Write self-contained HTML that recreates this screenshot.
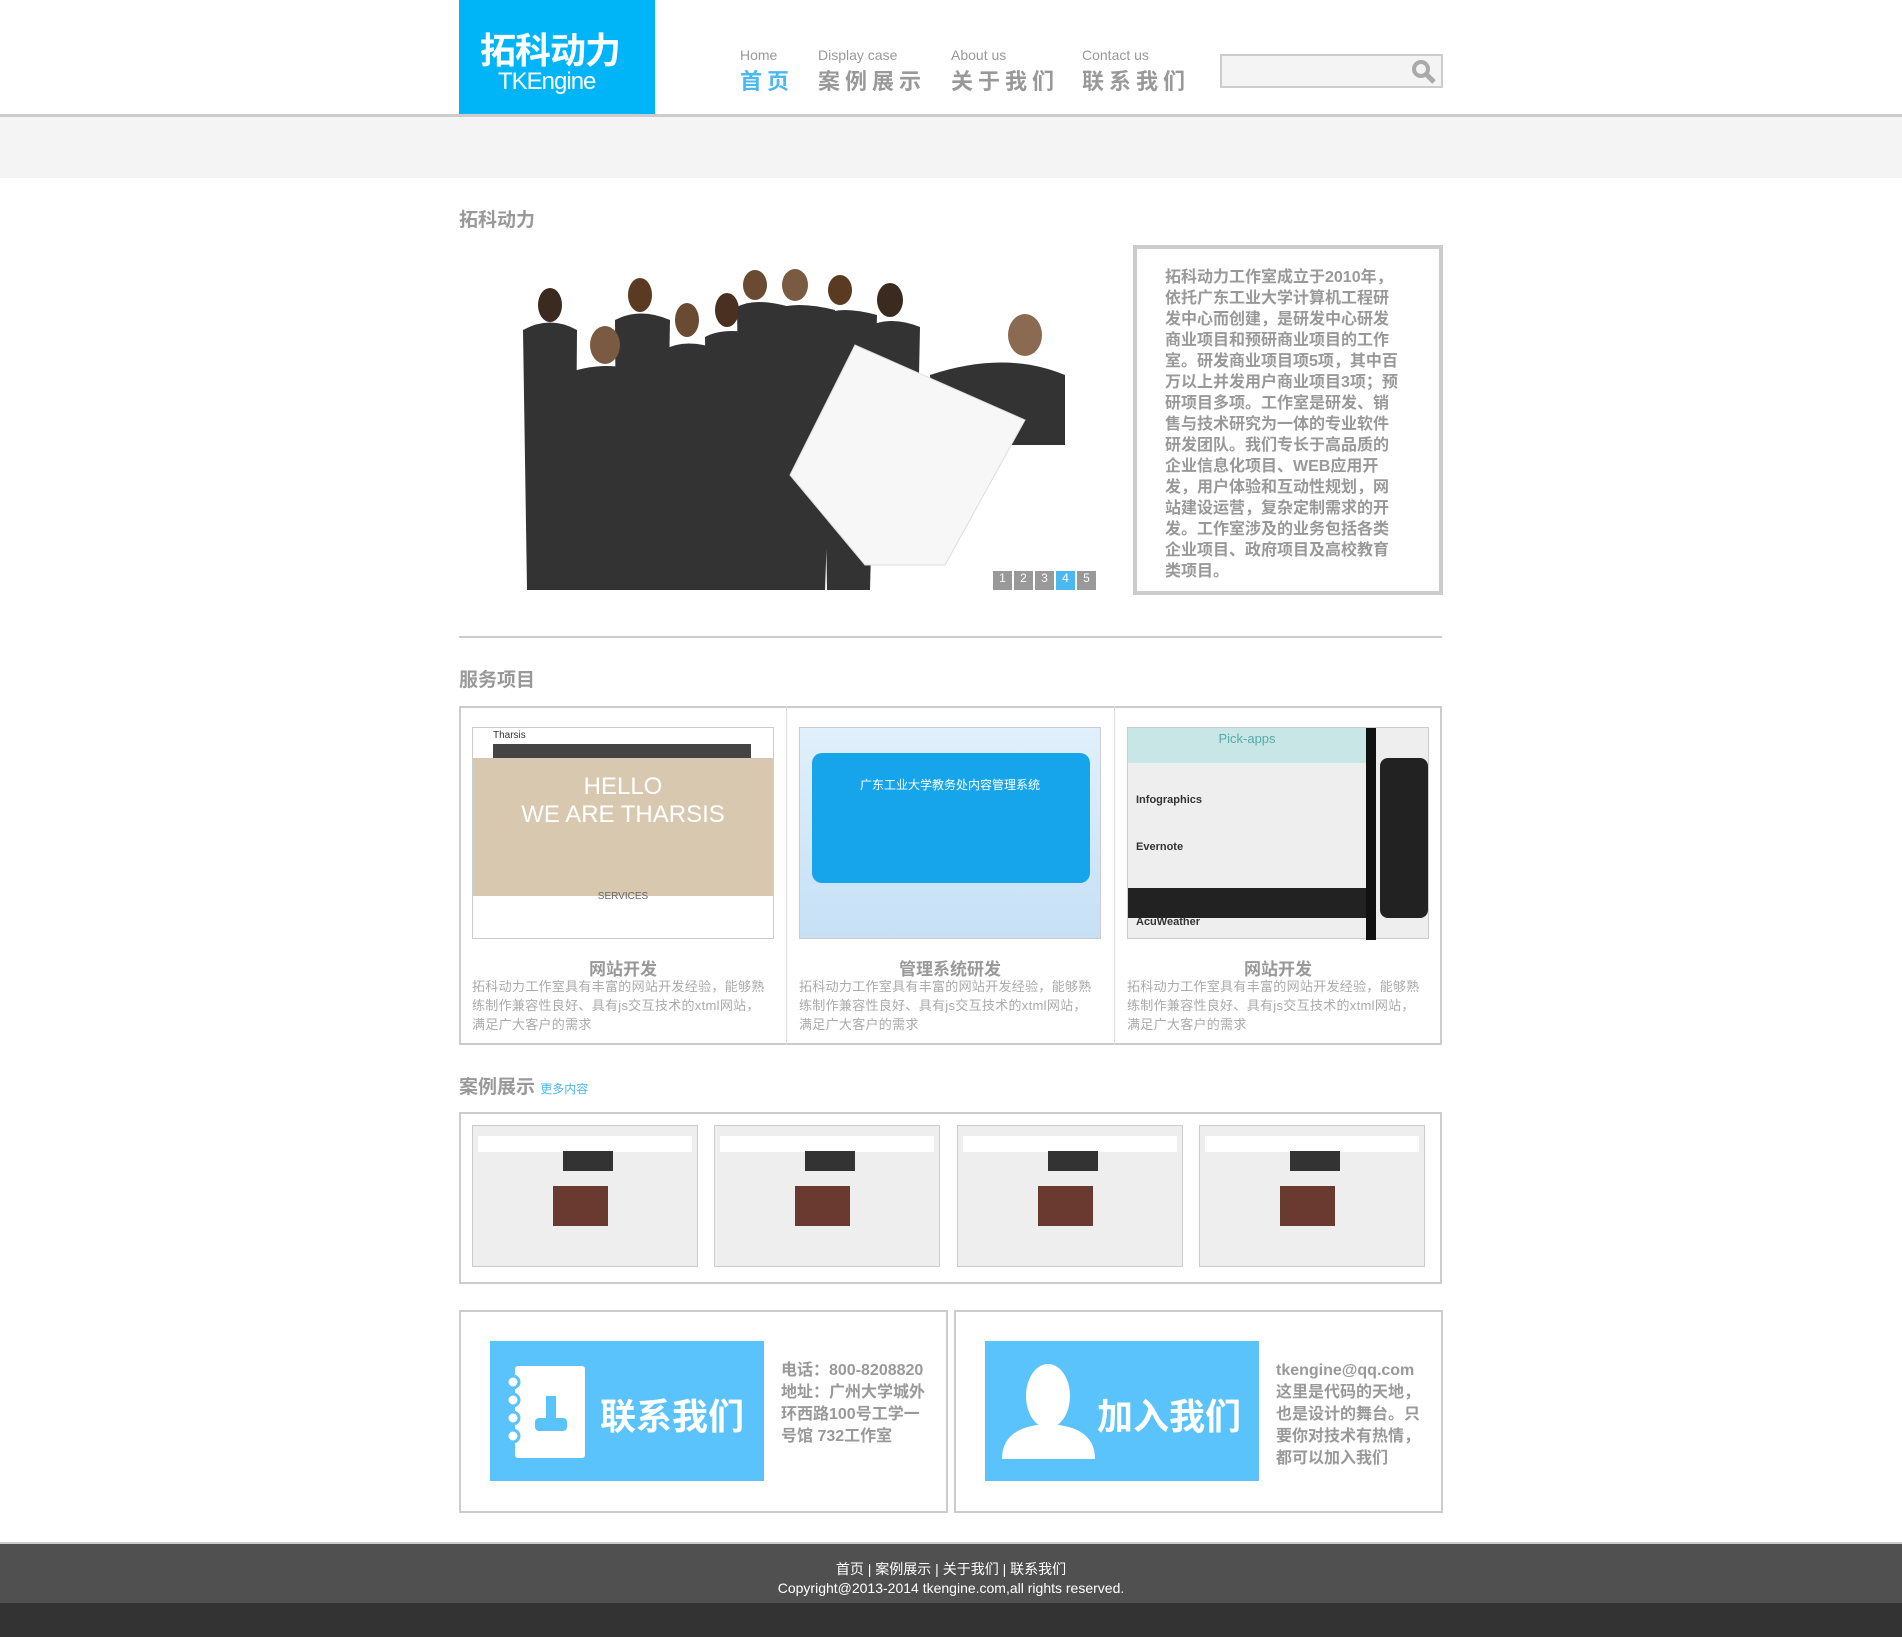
<!DOCTYPE html>
<html><head><meta charset="utf-8">
<style>
*{margin:0;padding:0;box-sizing:border-box}
body{width:1902px;height:1637px;background:#fff;font-family:"Liberation Sans","Noto Sans CJK SC",sans-serif;position:relative;overflow:hidden;color:#999}
.a{position:absolute}
.nav .en{font-size:14px;color:#999;position:absolute;top:47px}
.nav .cn{font-size:22px;color:#999;position:absolute;top:64px;letter-spacing:5px;font-weight:bold}
.h{font-size:19px;color:#999;font-weight:bold}
.desc{font-size:13px;line-height:19px;color:#aaa;letter-spacing:0.3px}
.case{position:absolute;top:1125px;width:226px;height:142px;border:1px solid #ccc;background:#eee;overflow:hidden}
</style></head><body>
<div class="a" style="left:459px;top:0;width:196px;height:115px;background:#00b4f8"></div>
<div class="a" style="left:480px;top:22px;font-size:36px;font-weight:bold;color:#fff;letter-spacing:-1px">拓科动力</div>
<div class="a" style="left:498px;top:68px;font-size:24px;color:#fff;letter-spacing:-1px">TKEngine</div>
<div class="nav">
<span class="en" style="left:740px">Home</span><span class="cn" style="left:740px;color:#4cb8f0">首页</span>
<span class="en" style="left:818px">Display case</span><span class="cn" style="left:818px">案例展示</span>
<span class="en" style="left:951px">About us</span><span class="cn" style="left:951px">关于我们</span>
<span class="en" style="left:1082px">Contact us</span><span class="cn" style="left:1082px">联系我们</span>
</div>
<div class="a" style="left:1220px;top:54px;width:223px;height:34px;border:2px solid #ccc;background:#f4f4f4"></div>
<svg class="a" style="left:1410px;top:58px" width="28" height="28"><circle cx="11" cy="11" r="7" fill="none" stroke="#aaa" stroke-width="4"/><line x1="16" y1="16" x2="24" y2="24" stroke="#aaa" stroke-width="5"/></svg>
<div class="a" style="left:0;top:114px;width:1902px;height:3px;background:#ccc"></div>
<div class="a" style="left:0;top:117px;width:1902px;height:61px;background:#f4f4f4"></div>

<div class="a h" style="left:459px;top:205px">拓科动力</div>
<svg class="a" style="left:505px;top:265px" width="600" height="330">
<g fill="#333">
<ellipse cx="45" cy="40" rx="12" ry="17" fill="#3a2a20"/><path d="M18 65 Q45 50 72 65 L70 325 L22 325Z"/>
<ellipse cx="135" cy="30" rx="12" ry="17" fill="#5a3a20"/><path d="M110 55 Q135 42 165 55 L160 325 L112 325Z"/>
<ellipse cx="100" cy="80" rx="15" ry="19" fill="#7a5a40"/><path d="M58 110 Q100 92 150 110 L145 325 L65 325Z"/>
<ellipse cx="182" cy="55" rx="12" ry="17" fill="#6a4a30"/><path d="M158 85 Q182 72 215 85 L210 325 L160 325Z"/>
<ellipse cx="222" cy="45" rx="12" ry="17" fill="#4a3020"/><path d="M200 72 Q222 60 265 72 L255 325 L205 325Z"/>
<ellipse cx="250" cy="20" rx="12" ry="15" fill="#6a4a30"/><path d="M232 42 Q250 32 285 42 L280 325 L236 325Z"/>
<ellipse cx="290" cy="20" rx="13" ry="16" fill="#7a5a40"/><path d="M268 45 Q290 35 330 45 L320 325 L272 325Z"/>
<ellipse cx="335" cy="25" rx="12" ry="15" fill="#5a3a20"/><path d="M318 50 Q335 40 372 50 L365 325 L322 325Z"/>
<ellipse cx="385" cy="35" rx="13" ry="17" fill="#3a2a20"/><path d="M362 62 Q385 50 415 62 L410 300 L365 300Z"/>
<ellipse cx="520" cy="70" rx="17" ry="21" fill="#8a6a50"/><path d="M425 110 Q500 85 560 110 L560 180 L430 180Z"/>
</g>
<polygon points="285,210 350,80 520,155 440,300 360,300" fill="#f7f7f7" stroke="#ddd"/>
</svg>
<div class="a" style="left:993px;top:571px;display:flex;gap:2px;font-size:12px">
<span style="background:#999;color:#fff;width:19px;height:19px;text-align:center">1</span><span style="background:#999;color:#fff;width:19px;height:19px;text-align:center">2</span><span style="background:#999;color:#fff;width:19px;height:19px;text-align:center">3</span><span style="background:#4cb8f0;color:#fff;width:19px;height:19px;text-align:center">4</span><span style="background:#999;color:#fff;width:19px;height:19px;text-align:center">5</span></div>
<div class="a" style="left:1133px;top:245px;width:310px;height:350px;border:4px solid #ccc;padding:18px 36px 0 28px;font-size:16px;line-height:21px;color:#999;font-weight:bold">拓科动力工作室成立于2010年，依托广东工业大学计算机工程研发中心而创建，是研发中心研发商业项目和预研商业项目的工作室。研发商业项目项5项，其中百万以上并发用户商业项目3项；预研项目多项。工作室是研发、销售与技术研究为一体的专业软件研发团队。我们专长于高品质的企业信息化项目、WEB应用开发，用户体验和互动性规划，网站建设运营，复杂定制需求的开发。工作室涉及的业务包括各类企业项目、政府项目及高校教育类项目。</div>
<div class="a" style="left:459px;top:636px;width:983px;height:2px;background:#ccc"></div>

<div class="a h" style="left:459px;top:665px">服务项目</div>
<div class="a" style="left:459px;top:706px;width:983px;height:339px;border:2px solid #ccc"></div>
<div class="a" style="left:786px;top:706px;width:1px;height:339px;background:#ddd"></div>
<div class="a" style="left:1114px;top:706px;width:1px;height:339px;background:#ddd"></div>
<div class="a" style="left:472px;top:727px;width:302px;height:212px;border:1px solid #ccc;background:linear-gradient(#fff 0 30px,#d8c8b0 30px 168px,#fff 168px)"><div style="position:absolute;left:20px;top:16px;width:258px;height:14px;background:#444"></div><div style="color:#fff;font-size:24px;text-align:center;margin-top:45px;line-height:28px">HELLO<br>WE ARE THARSIS</div><div style="color:#666;font-size:10px;text-align:center;margin-top:62px">SERVICES</div><div style="position:absolute;left:20px;top:2px;font-size:10px;color:#333">Tharsis</div></div>
<div class="a" style="left:799px;top:727px;width:302px;height:212px;border:1px solid #ccc;background:linear-gradient(#e0f0fc,#c6e0f6)"><div style="position:absolute;left:12px;top:25px;width:278px;height:130px;border-radius:10px;background:#16a5ea"></div><div style="position:absolute;left:0;width:300px;top:48px;text-align:center;color:#fff;font-size:12px">广东工业大学教务处内容管理系统</div></div>
<div class="a" style="left:1127px;top:727px;width:302px;height:212px;border:1px solid #ccc;background:#eee"><div style="position:absolute;left:0;top:0;width:238px;height:35px;background:#c8e6e6;color:#5aa;font-size:13px;text-align:center;line-height:22px">Pick-apps</div><div style="position:absolute;left:0;top:160px;width:238px;height:30px;background:#222"></div><div style="position:absolute;left:238px;top:0;width:10px;height:212px;background:#111"></div><div style="position:absolute;left:252px;top:30px;width:48px;height:160px;border-radius:8px;background:#222"></div><div style="position:absolute;left:8px;top:66px;font-size:11px;color:#333;font-weight:bold">Infographics</div><div style="position:absolute;left:8px;top:113px;font-size:11px;color:#333;font-weight:bold">Evernote</div><div style="position:absolute;left:8px;top:188px;font-size:11px;color:#333;font-weight:bold">AcuWeather</div></div>
<div class="a h" style="left:472px;top:955px;width:302px;text-align:center;font-size:17px">网站开发</div>
<div class="a h" style="left:799px;top:955px;width:302px;text-align:center;font-size:17px">管理系统研发</div>
<div class="a h" style="left:1127px;top:955px;width:302px;text-align:center;font-size:17px">网站开发</div>
<div class="a desc" style="left:472px;top:977px;width:300px">拓科动力工作室具有丰富的网站开发经验，能够熟练制作兼容性良好、具有js交互技术的xtml网站，满足广大客户的需求</div>
<div class="a desc" style="left:799px;top:977px;width:300px">拓科动力工作室具有丰富的网站开发经验，能够熟练制作兼容性良好、具有js交互技术的xtml网站，满足广大客户的需求</div>
<div class="a desc" style="left:1127px;top:977px;width:300px">拓科动力工作室具有丰富的网站开发经验，能够熟练制作兼容性良好、具有js交互技术的xtml网站，满足广大客户的需求</div>

<div class="a h" style="left:459px;top:1072px">案例展示 <span style="font-size:12px;color:#4cb8f0;font-weight:normal">更多内容</span></div>
<div class="a" style="left:459px;top:1112px;width:983px;height:172px;border:2px solid #ccc"></div>
<div class="case" style="left:472px"><div style="margin:10px 5px;height:16px;background:#fff"></div><div style="position:absolute;left:90px;top:25px;width:50px;height:20px;background:#333"></div><div style="position:absolute;left:80px;top:60px;width:55px;height:40px;background:#6a3a30"></div></div>
<div class="case" style="left:714px"><div style="margin:10px 5px;height:16px;background:#fff"></div><div style="position:absolute;left:90px;top:25px;width:50px;height:20px;background:#333"></div><div style="position:absolute;left:80px;top:60px;width:55px;height:40px;background:#6a3a30"></div></div>
<div class="case" style="left:957px"><div style="margin:10px 5px;height:16px;background:#fff"></div><div style="position:absolute;left:90px;top:25px;width:50px;height:20px;background:#333"></div><div style="position:absolute;left:80px;top:60px;width:55px;height:40px;background:#6a3a30"></div></div>
<div class="case" style="left:1199px"><div style="margin:10px 5px;height:16px;background:#fff"></div><div style="position:absolute;left:90px;top:25px;width:50px;height:20px;background:#333"></div><div style="position:absolute;left:80px;top:60px;width:55px;height:40px;background:#6a3a30"></div></div>

<div class="a" style="left:459px;top:1310px;width:489px;height:203px;border:2px solid #ccc"></div>
<div class="a" style="left:954px;top:1310px;width:489px;height:203px;border:2px solid #ccc"></div>
<div class="a" style="left:490px;top:1341px;width:274px;height:140px;background:#5bc3fc"></div>
<svg class="a" style="left:503px;top:1362px" width="90" height="100"><rect x="12" y="4" width="70" height="92" rx="3" fill="#fff"/><g fill="#fff" stroke="#5bc3fc" stroke-width="3"><circle cx="10" cy="20" r="6"/><circle cx="10" cy="38" r="6"/><circle cx="10" cy="56" r="6"/><circle cx="10" cy="74" r="6"/></g><rect x="43" y="34" width="10" height="26" fill="#5bc3fc"/><rect x="32" y="56" width="32" height="13" rx="4" fill="#5bc3fc"/></svg>
<div class="a" style="left:600px;top:1388px;font-size:36px;color:#fff;font-weight:bold">联系我们</div>
<div class="a" style="left:781px;top:1360px;font-size:16px;line-height:22px;color:#999;font-weight:bold;width:152px">电话：800-8208820<br>地址：广州大学城外环西路100号工学一号馆 732工作室</div>
<div class="a" style="left:985px;top:1341px;width:274px;height:140px;background:#5bc3fc"></div>
<svg class="a" style="left:1000px;top:1362px" width="100" height="100"><ellipse cx="48" cy="34" rx="22" ry="32" fill="#fff"/><path d="M2 97 Q2 64 48 62 Q95 64 95 97 Z" fill="#fff"/></svg>
<div class="a" style="left:1097px;top:1388px;font-size:36px;color:#fff;font-weight:bold">加入我们</div>
<div class="a" style="left:1276px;top:1360px;font-size:16px;line-height:22px;color:#999;font-weight:bold;width:155px">tkengine@qq.com 这里是代码的天地，也是设计的舞台。只要你对技术有热情，都可以加入我们</div>

<div class="a" style="left:0;top:1542px;width:1902px;height:61px;background:#505050;border-top:2px solid #ccc;color:#fff;text-align:center;font-size:14px;line-height:19px;padding-top:16px">首页 | 案例展示 | 关于我们 | 联系我们<br>Copyright@2013-2014 tkengine.com,all rights reserved.</div>
<div class="a" style="left:0;top:1603px;width:1902px;height:34px;background:#333"></div>
</body></html>
